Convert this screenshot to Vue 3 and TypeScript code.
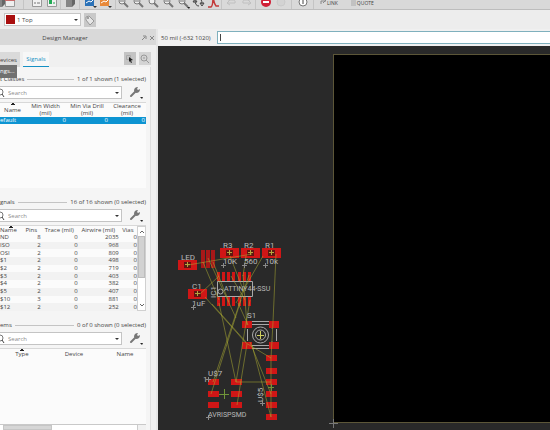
<script setup lang="ts">
import { ref } from 'vue'

type Pt = [number, number]

const tools: string[][] = [
  ['print', 'grid'],
  ['schem', 'green'],
  ['chip'],
  ['blue', 'orange'],
  ['zoomin', 'zoomout', 'zoomfit', 'zoomout', 'zoommenu', 'pan', 'curve'],
  ['undo', 'redo'],
  ['stop', 'idle'],
  ['info'],
]

const layer = ref('1 Top')
const command = ref('')
const netClassSearch = ref('')
const signalSearch = ref('')
const itemSearch = ref('')

const signals: [string, number, number, number, number][] = [
  ['ND', 8, 0, 2035, 0],
  ['ISO', 2, 0, 968, 0],
  ['OSI', 2, 0, 809, 0],
  ['$1', 2, 0, 498, 0],
  ['$2', 2, 0, 719, 0],
  ['$3', 2, 0, 403, 0],
  ['$4', 2, 0, 382, 0],
  ['$5', 2, 0, 407, 0],
  ['$10', 3, 0, 881, 0],
  ['$12', 2, 0, 252, 0],
]

const chips: Pt[] = [[178, 260], [220, 248], [241, 248], [262, 248], [188, 289]]
const icColumns: number[] = [0, 1, 2, 3, 4, 5, 6].map((i) => 217 + i * 5 + (i > 3 ? 1 : 0))
const pinColumns: number[] = [201, 206, 211]
const pads: Pt[] = [
  [208, 379], [208, 391], [208, 402],
  [231, 379], [231, 391], [231, 402],
  [266, 355], [266, 368], [266, 379], [266, 391], [266, 402], [266, 414],
]
const switchPads: Pt[] = [[242, 321], [269, 321], [242, 342], [269, 342]]

const airwires: string[] = [
  '188,265 252,254', '203,262 219,300', '208,258 236,318', '213,262 229,302',
  '230,256 244,292', '246,256 243,276', '263,256 236,303', '276,254 273,322 271,358 271,417',
  '205,297 246,343 271,358', '200,294 219,276', '212,304 246,342', '219,303 236,382',
  '249,275 213,382', '241,300 211,394', '250,300 236,382', '247,344 237,405',
  '250,342 271,394', '252,345 271,417', '236,382 271,382', '238,303 248,325',
  '243,275 247,325', '231,276 245,300',
]

const labels: { t: string; x: number; y: number; device?: boolean }[] = [
  { t: 'LED', x: 181, y: 260 },
  { t: 'R3', x: 223, y: 248 },
  { t: 'R2', x: 244, y: 248 },
  { t: 'R1', x: 265, y: 248 },
  { t: '10K', x: 223, y: 264 },
  { t: '560', x: 244, y: 264 },
  { t: '10k', x: 265, y: 264 },
  { t: 'C1', x: 192, y: 289 },
  { t: '1uF', x: 192, y: 306 },
  { t: 'ATTINY44-SSU', x: 224, y: 291, device: true },
  { t: 'S1', x: 247, y: 318 },
  { t: 'U$7', x: 208, y: 376 },
  { t: '1', x: 203, y: 382 },
  { t: 'AVRISPSMD', x: 208, y: 417, device: true },
]
const anchors: Pt[] = [[223, 265], [244, 265], [265, 265], [193, 307], [208, 379], [208, 417], [262, 403]]
</script>

<template>
  <div class="app">
    <header class="toolbar">
      <div v-for="(group, gi) in tools" :key="gi" class="group">
        <button v-for="(name, i) in group" :key="i" type="button" :aria-label="name">
          <svg width="13" height="14" viewBox="0 0 13 14">
            <g v-if="name === 'print' || name === 'chip'">
              <path d="M2 4h6l3-2v7l-3 3H2z" fill="#666" /><path d="M2 4h6v8H2z" fill="#858585" />
            </g>
            <g v-else-if="name === 'grid'">
              <path d="M1.500 1.500h9v10h-9z" fill="#eee" stroke="#999" /><path d="M1 4h10v2H1z" fill="#c96a6a" />
            </g>
            <g v-else-if="name === 'schem'">
              <path d="M1.500 1.500h9v10h-9z" fill="#f1f1f1" stroke="#999" /><path d="M3 8h2m1 0h3" stroke="#777" />
            </g>
            <g v-else-if="name === 'green'">
              <path d="M1.500 1.500h9v10h-9z" fill="#f1f1f1" stroke="#999" /><path d="M3 5h3v4H3z" fill="#2a5" /><path d="M7 8h2" stroke="#2a5" />
            </g>
            <g v-else-if="name === 'blue' || name === 'orange'">
              <path d="M1 1h9v10H1z" :fill="name === 'blue' ? '#2b72b8' : '#e8893a'" />
              <path d="M2 8l3-2 2 1 2-2" stroke="#fff" fill="none" /><path d="M9 11h4l-2 2z" fill="#333" />
            </g>
            <g v-else-if="name.startsWith('zoom')" fill="none" stroke="#777">
              <circle cx="5" cy="6" r="3" fill="#eee" /><path d="M7 8l4 4" stroke-width="2" />
              <path v-if="name !== 'zoomfit'" d="M3 6h4" />
              <path v-if="name === 'zoommenu'" d="M10 12h3l-1 2z" fill="#222" stroke="none" />
            </g>
            <path v-else-if="name === 'pan'" d="M3 5q0 6 4 6M10 9q0-6-4-6M1 7l2-3 2 3zM8 8l2 3 2-3z" fill="none" stroke="#444" />
            <path v-else-if="name === 'curve'" d="M1 12h3q2-1 2-11q1 8 3 10h3" fill="none" stroke="#c33a3a" stroke-width="1.500" />
            <path v-else-if="name === 'undo'" d="M2 8h8q1-3-3-3H3M5 5L2 8l3 2" fill="none" stroke="#c0c0c0" />
            <path v-else-if="name === 'redo'" d="M11 8H3q-1-3 3-3h4M8 5l3 3-3 2" fill="none" stroke="#c0c0c0" />
            <g v-else-if="name === 'stop'">
              <circle cx="6" cy="7" r="5" fill="#d01f36" /><path d="M3 6h6v2H3z" fill="#fff" />
            </g>
            <circle v-else-if="name === 'idle'" cx="6" cy="7" r="4" fill="#d3d3d3" stroke="#cacaca" />
            <g v-else>
              <circle cx="7" cy="7" r="4" fill="#fff" stroke="#777" /><path d="M7 4v5" stroke="#444" />
            </g>
          </svg>
        </button>
      </div>
      <div class="links">
        <button type="button"><svg width="6" height="7" viewBox="0 0 6 7"><path d="M1 5V2h3M3 4l3-3M4 1h2v2" fill="none" stroke="#888" /></svg>LINK</button>
        <button type="button"><svg width="6" height="7" viewBox="0 0 6 7"><path d="M1 2h5M1 4h5M1 6h5" stroke="#aaa" /></svg>QUOTE</button>
      </div>
    </header>

    <div class="layerbar">
      <div class="layer">
        <i class="swatch"></i>
        <select v-model="layer" aria-label="Layer"><option>1 Top</option></select>
        <i class="caret"></i>
      </div>
      <button type="button" class="tag" aria-label="Tag">
        <svg width="12" height="14" viewBox="0 0 12 14"><path d="M2 4l3-1 5 5-4 4-4-5z" fill="#e6e6e6" stroke="#999" /><circle cx="4" cy="5" r="1" fill="#888" /></svg>
      </button>
    </div>

    <main>
      <aside>
        <h1><span>Design Manager</span>
          <svg width="16" height="8" viewBox="0 0 16 8"><path d="M2 6l3-3M3 2h3v3M10 2l4 4M14 2l-4 4" fill="none" stroke="#888" /></svg>
        </h1>
        <div class="dock">
          <nav>
            <button type="button" class="tab">evices</button>
            <button type="button" class="tab active">Signals</button>
            <span class="grow"></span>
            <button type="button" class="tool pressed" aria-label="Select"><svg width="12" height="13" viewBox="0 0 12 13"><path d="M2.500 3.500h4v4h-4z" fill="none" stroke="#aaa" /><path d="M5 5l4 3-2 .5 1 2-1 .5-1-2-1 1z" fill="#222" /></svg></button>
            <button type="button" class="tool" aria-label="Zoom to"><svg width="12" height="13" viewBox="0 0 12 13"><circle cx="5" cy="6" r="3" fill="none" stroke="#999" /><path d="M7 8l3 3M4 6h2" stroke="#999" /></svg></button>
            <div class="tip" role="tooltip">ngs...</div>
          </nav>

          <div class="body">
            <section>
              <h2>t Classes<hr />1 of 1 shown (1 selected)</h2>
              <div class="find">
                <label><svg width="8" height="10" viewBox="0 0 8 10"><circle cx="0" cy="4" r="3" fill="none" stroke="#777" /><path d="M2 6l2 3" stroke="#444" /></svg>
                  <input v-model="netClassSearch" placeholder="Search" aria-label="Search net classes" /><i class="caret"></i></label>
                <button type="button" aria-label="Options"><svg width="16" height="13" viewBox="0 0 16 13"><path d="M2 10l5-5" stroke="#777" stroke-width="2" stroke-linecap="round" /><path d="M5 5q0-4 4-4L8 3l1 1 2-1q0 4-4 4z" fill="#777" /><path d="M11 11h3l-1 2z" fill="#222" /></svg></button>
              </div>
              <div class="list">
                <table class="classes">
                  <colgroup><col class="c1" /><col class="c2" /><col class="c3" /><col /></colgroup>
                  <thead><tr><th class="sorted">Name</th><th>Min Width<br />(mil)</th><th>Min Via Drill<br />(mil)</th><th>Clearance<br />(mil)</th></tr></thead>
                  <tbody><tr><td>efault</td><td>0</td><td>0</td><td>0</td></tr></tbody>
                </table>
              </div>
            </section>

            <section>
              <h2>gnals<hr />16 of 16 shown (0 selected)</h2>
              <div class="find">
                <label><svg width="8" height="10" viewBox="0 0 8 10"><circle cx="0" cy="4" r="3" fill="none" stroke="#777" /><path d="M2 6l2 3" stroke="#444" /></svg>
                  <input v-model="signalSearch" placeholder="Search" aria-label="Search signals" /><i class="caret"></i></label>
                <button type="button" aria-label="Options"><svg width="16" height="13" viewBox="0 0 16 13"><path d="M2 10l5-5" stroke="#777" stroke-width="2" stroke-linecap="round" /><path d="M5 5q0-4 4-4L8 3l1 1 2-1q0 4-4 4z" fill="#777" /><path d="M11 11h3l-1 2z" fill="#222" /></svg></button>
              </div>
              <div class="list">
                <table class="signals">
                  <colgroup><col class="c1" /><col class="c2" /><col class="c3" /><col class="c4" /><col /></colgroup>
                  <thead><tr><th class="sorted">Name</th><th>Pins</th><th>Trace (mil)</th><th>Airwire (mil)</th><th>Vias</th></tr></thead>
                  <tbody><tr v-for="s in signals" :key="s[0]"><td v-for="(v, i) in s" :key="i">{{ v }}</td></tr></tbody>
                </table>
                <div class="vbar">
                  <svg width="9" height="9" viewBox="0 0 9 9"><path d="M2 6l2-2 2 2" fill="none" stroke="#666" /></svg>
                  <i></i>
                  <svg width="9" height="9" viewBox="0 0 9 9"><path d="M2 3l2 2 2-2" fill="none" stroke="#666" /></svg>
                </div>
              </div>
            </section>

            <section>
              <h2>ems<hr />0 of 0 shown (0 selected)</h2>
              <div class="find">
                <label><svg width="8" height="10" viewBox="0 0 8 10"><circle cx="0" cy="4" r="3" fill="none" stroke="#777" /><path d="M2 6l2 3" stroke="#444" /></svg>
                  <input v-model="itemSearch" placeholder="Search" aria-label="Search items" /><i class="caret"></i></label>
                <button type="button" aria-label="Options"><svg width="16" height="13" viewBox="0 0 16 13"><path d="M2 10l5-5" stroke="#777" stroke-width="2" stroke-linecap="round" /><path d="M5 5q0-4 4-4L8 3l1 1 2-1q0 4-4 4z" fill="#777" /><path d="M11 11h3l-1 2z" fill="#222" /></svg></button>
              </div>
              <div class="list last">
                <table class="items">
                  <colgroup><col class="c1" /><col class="c2" /><col /></colgroup>
                  <thead><tr><th class="sorted">Type</th><th>Device</th><th>Name</th></tr></thead>
                </table>
              </div>
              <div class="hbar"><i></i><b></b></div>
            </section>
          </div>
        </div>
      </aside>

      <div class="editor">
        <div class="cmd">
          <label for="command">50 mil (-632 1020)</label>
          <div class="entry"><i></i><input id="command" v-model="command" /></div>
        </div>
        <div class="canvas">
          <svg width="100%" height="100%">
            <g transform="translate(-158 -46)">
              <rect x="333.500" y="54.500" width="4000" height="368" fill="#000" stroke="#5c5638" />
              <path d="M329 423.500h9M333.500 419v9" stroke="#777" />

              <g fill="#d01616">
                <rect v-for="c in chips" :key="c.join()" :x="c[0]" :y="c[1]" width="19" height="10" />
                <rect v-for="x in pinColumns" :key="'p' + x" :x="x" y="250" width="4" height="18" fill="#a81818" />
                <rect v-for="x in icColumns" :key="'t' + x" :x="x" y="272" width="3" height="9" />
                <rect v-for="x in icColumns" :key="'b' + x" :x="x" y="297" width="3" height="9" />
                <rect v-for="p in pads" :key="p.join()" :x="p[0]" :y="p[1]" width="11" height="6" />
              </g>
              <g v-for="c in chips" :key="'m' + c.join()">
                <rect :x="c[0] + 6" :y="c[1] + 2" width="7" height="6" fill="#5e1712" />
                <path :d="`M${c[0] + 7} ${c[1] + 4.5}h5M${c[0] + 9.5} ${c[1] + 2}v5`" stroke="#b5a840" />
              </g>

              <g fill="none" stroke="#a9a9a9">
                <path d="M217.500 281.500h35v15h-35z" />
                <circle cx="220.500" cy="291.500" r="2.500" />
                <path d="M248 321.500h26M248 348.500h26M247.500 329v12M276.500 329v12" />
                <path d="M252 324.500h17l3 4M252 345.500h17l3-4M252 324l-3 4M252 346l-3-4" />
                <circle cx="260.500" cy="335" r="8" />
                <circle cx="260.500" cy="335" r="5" />
              </g>
              <rect v-for="p in switchPads" :key="p.join()" :x="p[0]" :y="p[1]" width="10" height="7" fill="#d01616" />

              <polyline v-for="a in airwires" :key="a" :points="a" fill="none" stroke="#a8a832" stroke-opacity="0.600" stroke-width="0.900" />
              <path d="M219 394.500h10M224.500 389v10M268 387.500h6M271.500 384v7" stroke="#6f9438" fill="none" />
              <path d="M257 335.500h7M260.500 331v8" stroke="#cfcf60" />
              <path v-for="a in anchors" :key="a.join()" :d="`M${a[0] - 2} ${a[1] + 0.5}h5M${a[0] + 0.5} ${a[1] - 2}v5`" stroke="#8a8a8a" />

              <g class="silk">
                <text v-for="l in labels" :key="l.t" :x="l.x" :y="l.y" :class="{ device: l.device }">{{ l.t }}</text>
                <text transform="translate(216 298) rotate(-90)">IC1</text>
                <text transform="translate(263 402) rotate(-90)">U$5</text>
              </g>
            </g>
          </svg>
        </div>
      </div>
    </main>
  </div>
</template>

<style>
body { margin: 0; }
</style>

<style scoped>
* { box-sizing: border-box; }
.app {
  height: 100vh;
  display: flex;
  flex-direction: column;
  overflow: hidden;
  background: #ededed;
  color: #444;
  font: 6px/8px "Open Sans", "Noto Sans", sans-serif;
}
button, input, select {
  font: inherit;
  color: inherit;
  border: 0;
  padding: 0;
  margin: 0;
  background: none;
  border-radius: 0;
}
svg { display: block; flex: none; }

.toolbar {
  flex: none;
  height: 10px;
  display: grid;
  grid-template-columns: 24px 37px 19px 36px 106px 34px 36px 22px 1fr;
  background: #d9d9d9;
  border-bottom: 1px solid #bdbdbd;
  overflow: hidden;
}
.group { display: flex; justify-content: center; border-right: 1px solid #c4c4c4; height: 9px; }
.group:first-child { justify-content: flex-start; margin-left: -5px; }
.group:nth-child(2) { justify-content: flex-end; }
.group button { width: 15px; height: 14px; margin-top: -5px; flex: none; display: flex; justify-content: center; }
.group:first-child button { width: 10px; }
.links { display: flex; gap: 12px; padding-left: 6px; height: 5px; }
.links button { display: flex; align-items: center; gap: 1px; height: 5px; font-size: 5px; }

.layerbar { flex: none; height: 19px; padding: 3px 4px; display: flex; gap: 3px; }
.layer { width: 77px; height: 13px; display: flex; align-items: center; background: #fff; border: 1px solid #c6c6c6; padding-right: 2px; }
.swatch { width: 9px; height: 9px; background: #a90e0e; margin: 0 2px 0 1px; flex: none; }
.layer select { flex: 1; min-width: 0; appearance: none; outline: 0; }
.caret { flex: none; border: 2px solid transparent; border-top: 2px solid #333; border-bottom: 0; }
.tag { width: 12px; height: 14px; background: #c9c9c9; }

main { flex: 1; min-height: 0; display: flex; }
aside { flex: none; width: 158px; display: flex; flex-direction: column; border-right: 2px solid #e6e6e6; }
h1 {
  flex: none;
  height: 16px;
  margin: 0;
  display: flex;
  align-items: center;
  background: #d9d9d9;
  font: inherit;
  padding-top: 2px;
}
h1 span { flex: 1; text-align: center; padding-right: 10px; }
.dock { flex: 1; min-height: 0; display: flex; flex-direction: column; padding: 7px 5px 0 0; background: #f0f0f0; }
nav { position: relative; display: flex; flex: none; height: 15px; gap: 3px; }
.tab { height: 15px; width: 20px; background: #dadada; text-align: left; }
.tab.active { width: 26px; background: #f7f7f7; color: #1590c4; text-align: center; border-bottom: 1px solid #1590c4; }
.grow { flex: 1; }
.tool { width: 12px; height: 13px; background: #d4d4d4; }
.tool.pressed { background: #c4c4c4; }
.tip { position: absolute; left: 0; top: 13px; padding: 2px 2px 3px 0; background: #707070; color: #fff; }
.body { flex: 1; min-height: 0; display: flex; flex-direction: column; gap: 9px; padding: 7px 4px 0 0; background: #f5f5f5; border-right: 1px solid #dedede; overflow: hidden; }
section { flex: none; }
section:last-child { flex: 1; display: flex; flex-direction: column; min-height: 0; }
h2 { margin: 0; height: 10px; display: flex; align-items: center; gap: 3px; font: inherit; white-space: nowrap; flex: none; }
h2 hr { flex: 1; height: 1px; border: 0; margin: 0; background: #c4c4c4; }
.find { display: flex; gap: 7px; margin: 2px 0 3px; flex: none; }
.find label { flex: 1; min-width: 0; height: 13px; display: flex; align-items: center; background: #fff; border: 1px solid #c4c4c4; border-left: 0; padding-right: 2px; }
.find input { flex: 1; min-width: 0; outline: 0; }
.find input::placeholder { color: #8c8c8c; opacity: 1; }
.find button { width: 17px; height: 13px; }
.list { height: 86px; display: flex; align-items: flex-start; background: #fbfbfb; border-top: 1px solid #d8d8d8; overflow: hidden; }
.list.last { height: auto; flex: 1; }
.hbar { flex: none; height: 6px; display: flex; background: #fff; border-top: 1px solid #c9c9c9; padding-left: 3px; justify-content: space-between; }
.hbar i { width: 49px; background: #d6d6d6; border: 1px solid #c6c6c6; }
.hbar b { width: 9px; border-left: 1px solid #ccc; background: #f1f1f1; }

table { flex: 1; min-width: 0; table-layout: fixed; border-collapse: collapse; line-height: 7px; }
th, td { padding: 0; font-weight: normal; white-space: nowrap; text-align: right; }
th { text-align: center; }
td:first-child { text-align: left; }
th.sorted {
  background:
    linear-gradient(#222, #222) center 0 / 2px 1px no-repeat,
    linear-gradient(#222, #222) center 1px / 4px 1px no-repeat;
}
.classes thead th { height: 14px; }
.classes .c1 { width: 25px; }
.classes .c2 { width: 41px; }
.classes .c3 { width: 42px; }
.classes tbody td { height: 7px; background: #0d94d2; color: #fff; }
.classes td:last-child { padding-right: 1px; }
.signals { height: 85px; }
.signals .c1 { width: 20px; }
.signals .c2 { width: 19px; }
.signals .c3 { width: 37px; }
.signals .c4 { width: 41px; }
.signals th { height: 8px; }
.signals th.sorted { padding-right: 5px; }
.signals tbody tr:nth-child(even) { background: #f2f2f2; }
.items .c1 { width: 44px; }
.items .c2 { width: 60px; }
.items th { height: 10px; }
.vbar { flex: none; width: 9px; height: 85px; display: flex; flex-direction: column; background: #fff; border: 1px solid #d0d0d0; }
.vbar i { height: 42px; margin-bottom: auto; background: #d2d2d2; border: 1px solid #bdbdbd; }

.editor { flex: 1; min-width: 0; display: flex; flex-direction: column; }
.cmd { flex: none; height: 17px; display: flex; align-items: center; background: #f0f0f0; padding-left: 3px; }
.cmd label { width: 56px; white-space: nowrap; }
.entry { flex: 1; height: 13px; display: flex; align-items: center; background: #fff; border: 1px solid #7fb0bd; border-right: 0; padding-left: 2px; }
.entry i { width: 1px; height: 7px; background: #444; }
.entry input { flex: 1; min-width: 0; outline: 0; }
.canvas { flex: 1; min-height: 0; background: #292929; overflow: hidden; }
.silk { fill: #b9b9b9; font: 8px "Roboto", sans-serif; }
.silk .device { font-size: 7px; }
</style>
